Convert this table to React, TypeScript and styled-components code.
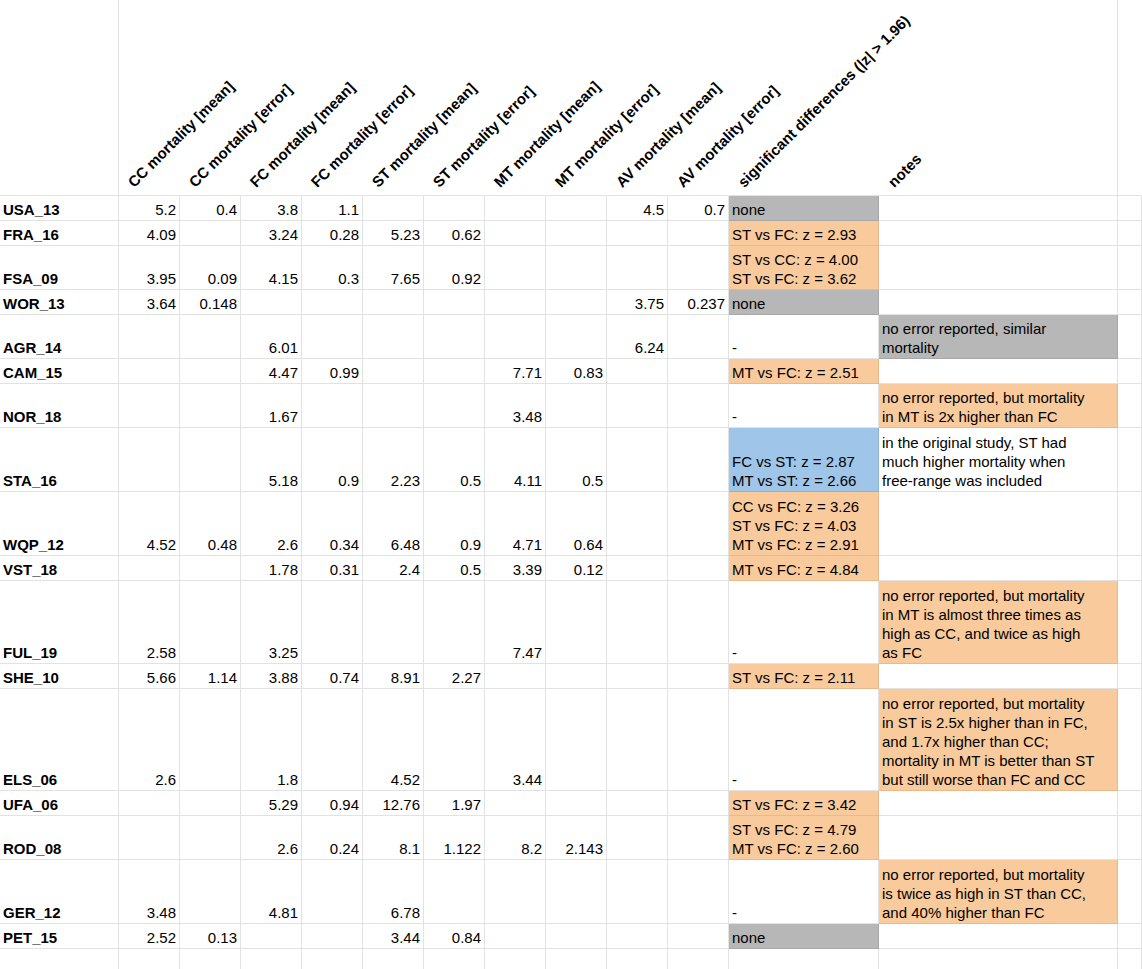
import React from "react"
import styled, { createGlobalStyle, css } from "styled-components"

const GlobalStyle = createGlobalStyle`
  html, body {
    margin: 0;
    padding: 0;
    background: #ffffff;
    overflow: hidden;
  }
  body {
    font-family: "Liberation Sans", Arial, sans-serif;
    color: #000000;
  }
`

const gridLine = "#e2e2e2"

type Tone = "none" | "gray" | "orange" | "blue"

const fills: Record<Tone, { bg: string; line: string }> = {
  none: { bg: "transparent", line: gridLine },
  gray: { bg: "#b7b7b7", line: "#a7a7a7" },
  orange: { bg: "#f9cb9c", line: "#e9b98a" },
  blue: { bg: "#9fc5e8", line: "#8db4d8" },
}

const Sheet = styled.div`
  width: 1142px;
  height: 969px;
  overflow: hidden;
  font-size: 15px;
  line-height: 19px;
`

const Row = styled.div<{ $h: number }>`
  display: grid;
  grid-template-columns: 119px repeat(10, 61px) 150px 239px 1fr;
  height: ${(p) => p.$h}px;
`

const cellBase = css`
  box-sizing: border-box;
  display: flex;
  flex-direction: column;
  justify-content: flex-end;
  padding: 0 3px 1px 3px;
  border-right: 1px solid ${gridLine};
  border-bottom: 1px solid ${gridLine};
  white-space: nowrap;
  overflow: hidden;
`

const LabelCell = styled.div`
  ${cellBase};
  font-weight: bold;
`

const NumCell = styled.div`
  ${cellBase};
  text-align: right;
`

const TextCell = styled.div<{ $tone: Tone }>`
  ${cellBase};
  background: ${(p) => fills[p.$tone].bg};
  border-right-color: ${(p) => fills[p.$tone].line};
  border-bottom-color: ${(p) => fills[p.$tone].line};
`

const EmptyCell = styled.div`
  ${cellBase};
`

const HeaderCell = styled.div<{ $ruled?: boolean }>`
  box-sizing: border-box;
  display: flex;
  align-items: flex-end;
  padding: 0 0 4px 18px;
  border-bottom: 1px solid ${gridLine};
  border-right: 1px solid ${(p) => (p.$ruled ? gridLine : "transparent")};
  min-width: 0;
`

const HeaderText = styled.span`
  flex-shrink: 0;
  font-weight: bold;
  white-space: nowrap;
  line-height: 19px;
  transform: rotate(-45deg);
  transform-origin: left bottom;
`

const headers = [
  "CC mortality [mean]",
  "CC mortality [error]",
  "FC mortality [mean]",
  "FC mortality [error]",
  "ST mortality [mean]",
  "ST mortality [error]",
  "MT mortality [mean]",
  "MT mortality [error]",
  "AV mortality [mean]",
  "AV mortality [error]",
  "significant differences (|z| > 1.96)",
  "notes",
]

interface Study {
  id: string
  h: number
  values: string[]
  sig: string[]
  sigTone: Tone
  notes?: string[]
  notesTone?: Tone
}

const studies: Study[] = [
  { id: "USA_13", h: 25, values: ["5.2", "0.4", "3.8", "1.1", "", "", "", "", "4.5", "0.7"], sig: ["none"], sigTone: "gray" },
  { id: "FRA_16", h: 25, values: ["4.09", "", "3.24", "0.28", "5.23", "0.62"], sig: ["ST vs FC: z = 2.93"], sigTone: "orange" },
  {
    id: "FSA_09",
    h: 44,
    values: ["3.95", "0.09", "4.15", "0.3", "7.65", "0.92"],
    sig: ["ST vs CC: z = 4.00", "ST vs FC: z = 3.62"],
    sigTone: "orange",
  },
  { id: "WOR_13", h: 25, values: ["3.64", "0.148", "", "", "", "", "", "", "3.75", "0.237"], sig: ["none"], sigTone: "gray" },
  {
    id: "AGR_14",
    h: 44,
    values: ["", "", "6.01", "", "", "", "", "", "6.24"],
    sig: ["-"],
    sigTone: "none",
    notes: ["no error reported, similar", "mortality"],
    notesTone: "gray",
  },
  { id: "CAM_15", h: 25, values: ["", "", "4.47", "0.99", "", "", "7.71", "0.83"], sig: ["MT vs FC: z = 2.51"], sigTone: "orange" },
  {
    id: "NOR_18",
    h: 44,
    values: ["", "", "1.67", "", "", "", "3.48"],
    sig: ["-"],
    sigTone: "none",
    notes: ["no error reported, but mortality", "in MT is 2x higher than FC"],
    notesTone: "orange",
  },
  {
    id: "STA_16",
    h: 64,
    values: ["", "", "5.18", "0.9", "2.23", "0.5", "4.11", "0.5"],
    sig: ["FC vs ST: z = 2.87", "MT vs ST: z = 2.66"],
    sigTone: "blue",
    notes: ["in the original study, ST had", "much higher mortality when", "free-range was included"],
    notesTone: "none",
  },
  {
    id: "WQP_12",
    h: 64,
    values: ["4.52", "0.48", "2.6", "0.34", "6.48", "0.9", "4.71", "0.64"],
    sig: ["CC vs FC: z = 3.26", "ST vs FC: z = 4.03", "MT vs FC: z = 2.91"],
    sigTone: "orange",
  },
  { id: "VST_18", h: 25, values: ["", "", "1.78", "0.31", "2.4", "0.5", "3.39", "0.12"], sig: ["MT vs FC: z = 4.84"], sigTone: "orange" },
  {
    id: "FUL_19",
    h: 83,
    values: ["2.58", "", "3.25", "", "", "", "7.47"],
    sig: ["-"],
    sigTone: "none",
    notes: [
      "no error reported, but mortality",
      "in MT is almost three times as",
      "high as CC, and twice as high",
      "as FC",
    ],
    notesTone: "orange",
  },
  { id: "SHE_10", h: 25, values: ["5.66", "1.14", "3.88", "0.74", "8.91", "2.27"], sig: ["ST vs FC: z = 2.11"], sigTone: "orange" },
  {
    id: "ELS_06",
    h: 102,
    values: ["2.6", "", "1.8", "", "4.52", "", "3.44"],
    sig: ["-"],
    sigTone: "none",
    notes: [
      "no error reported, but mortality",
      "in ST is 2.5x higher than in FC,",
      "and 1.7x higher than CC;",
      "mortality in MT is better than ST",
      "but still worse than FC and CC",
    ],
    notesTone: "orange",
  },
  { id: "UFA_06", h: 25, values: ["", "", "5.29", "0.94", "12.76", "1.97"], sig: ["ST vs FC: z = 3.42"], sigTone: "orange" },
  {
    id: "ROD_08",
    h: 44,
    values: ["", "", "2.6", "0.24", "8.1", "1.122", "8.2", "2.143"],
    sig: ["ST vs FC: z = 4.79", "MT vs FC: z = 2.60"],
    sigTone: "orange",
  },
  {
    id: "GER_12",
    h: 64,
    values: ["3.48", "", "4.81", "", "6.78"],
    sig: ["-"],
    sigTone: "none",
    notes: ["no error reported, but mortality", "is twice as high in ST than CC,", "and 40% higher than FC"],
    notesTone: "orange",
  },
  { id: "PET_15", h: 25, values: ["2.52", "0.13", "", "", "3.44", "0.84"], sig: ["none"], sigTone: "gray" },
]

const Lines: React.FC<{ lines: string[] }> = ({ lines }) => (
  <>
    {lines.map((l, i) => (
      <div key={i}>{l}</div>
    ))}
  </>
)

const StudyRow: React.FC<{ study: Study }> = ({ study }) => {
  const cells = Array.from({ length: 10 }, (_, i) => study.values[i] ?? "")
  return (
    <Row $h={study.h}>
      <LabelCell>{study.id}</LabelCell>
      {cells.map((v, i) => (
        <NumCell key={i}>{v}</NumCell>
      ))}
      <TextCell $tone={study.sigTone}>
        <Lines lines={study.sig} />
      </TextCell>
      <TextCell $tone={study.notesTone ?? "none"}>
        <Lines lines={study.notes ?? []} />
      </TextCell>
      <EmptyCell />
    </Row>
  )
}

export default function App() {
  return (
    <>
      <GlobalStyle />
      <Sheet>
        <Row $h={196}>
          <HeaderCell $ruled />
          {headers.map((h, i) => (
            <HeaderCell key={h} $ruled={i === headers.length - 1}>
              <HeaderText>{h}</HeaderText>
            </HeaderCell>
          ))}
          <HeaderCell />
        </Row>
        {studies.map((s) => (
          <StudyRow key={s.id} study={s} />
        ))}
        <Row $h={25}>
          <EmptyCell />
          {Array.from({ length: 12 }, (_, i) => (
            <EmptyCell key={i} />
          ))}
          <EmptyCell />
        </Row>
      </Sheet>
    </>
  )
}
